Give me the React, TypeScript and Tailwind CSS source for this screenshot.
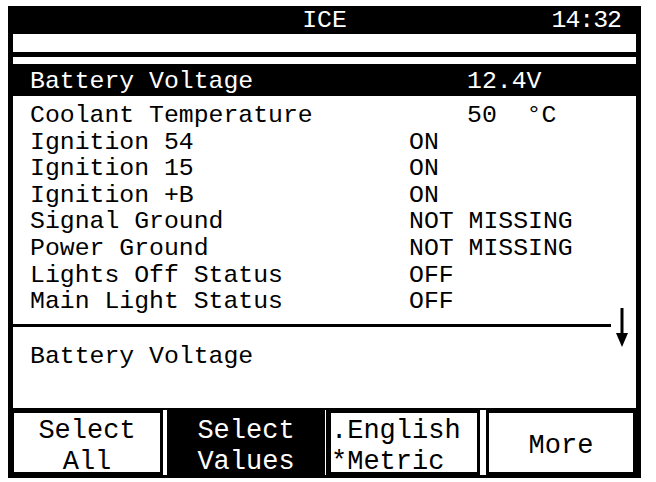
import React from "react";

type Row = {
	label: string;
	value: string;
	col?: "far" | "mid";
};

const rows: Row[] = [
	{ label: "Coolant Temperature", value: "50  °C", col: "far" },
	{ label: "Ignition 54", value: "ON" },
	{ label: "Ignition 15", value: "ON" },
	{ label: "Ignition +B", value: "ON" },
	{ label: "Signal Ground", value: "NOT MISSING" },
	{ label: "Power Ground", value: "NOT MISSING" },
	{ label: "Lights Off Status", value: "OFF" },
	{ label: "Main Light Status", value: "OFF" },
];

const ScrollArrow = () => (
	<svg width="14" height="40" viewBox="0 0 14 40" className="absolute left-[602px] top-[212px]">
		<rect x="5.5" y="0" width="3" height="28" fill="black" />
		<polygon points="1,25 13,25 7,39" fill="black" />
	</svg>
);

const SoftKey = ({
	lines,
	dark,
	align,
	className,
}: {
	lines: string[];
	dark?: boolean;
	align?: "left" | "center";
	className: string;
}) => (
	<div
		className={
			className +
			" flex flex-col justify-center h-full pt-[8px] " +
			(dark ? "bg-black text-white border-[3px] border-black" : "bg-white text-black border-[3px] border-black") +
			(align === "left" ? " items-start pt-[4px]" : " items-center")
		}
	>
		{lines.map((l) => (
			<span key={l} className="leading-[31px] whitespace-pre">
				{l}
			</span>
		))}
	</div>
);

export default function App() {
	return (
		<div className="w-[656px] h-[482px] bg-white overflow-hidden font-['Liberation_Mono','Courier_New',monospace]">
			<div className="ml-[8px] mt-[6px] w-[633px] h-[472px] bg-black flex flex-col px-[5px] pb-[3px]">
				{/* title bar */}
				<div className="h-[28px] -mx-[5px] grid grid-cols-3 items-center text-white text-[24.8px] leading-none">
					<span />
					<span className="text-center">ICE</span>
					<span className="text-right pr-[20px] tracking-[-1px]">14:32</span>
				</div>
				<div className="h-[18px] bg-white" />
				<div className="h-[5px]" />
				<div className="h-[7px] bg-white" />

				{/* selected row */}
				<div className="h-[32px] flex items-center text-white text-[24.8px] whitespace-pre pt-[3px]">
					<span className="w-[454px] pl-[17px]">Battery Voltage</span>
					<span>12.4V</span>
				</div>

				{/* list + description */}
				<div className="relative flex-1 bg-white text-black text-[24.8px]">
					<div className="pt-[6px] pb-[9px]">
						{rows.map((r) => (
							<div key={r.label} className="flex h-[26.6px] leading-[26.6px] whitespace-pre">
								<span className={"pl-[17px] " + (r.col === "far" ? "w-[454px]" : "w-[396px]")}>{r.label}</span>
								<span>{r.value}</span>
							</div>
						))}
					</div>
					<div className="h-[3px] w-[598px] bg-black" />
					<div className="pt-[16px] pl-[17px] leading-[26.6px]">Battery Voltage</div>
					<ScrollArrow />
				</div>

				{/* soft keys */}
				<div className="h-[2px]" />
				<div className="h-[65px] bg-white flex text-[27px] -ml-[2px]">
					<SoftKey className="w-[152px]" lines={["Select", "All"]} />
					<div className="w-[4px]" />
					<SoftKey className="w-[158px]" lines={["Select", "Values"]} dark />
					<div className="w-[3px] flex">
						<div className="w-[1px]" />
						<div className="w-[2px] bg-black" />
					</div>
					<SoftKey className="w-[152px]" lines={[".English", "*Metric"]} align="left" />
					<div className="w-[6px]" />
					<SoftKey className="flex-1" lines={["More"]} />
				</div>
			</div>
		</div>
	);
}
